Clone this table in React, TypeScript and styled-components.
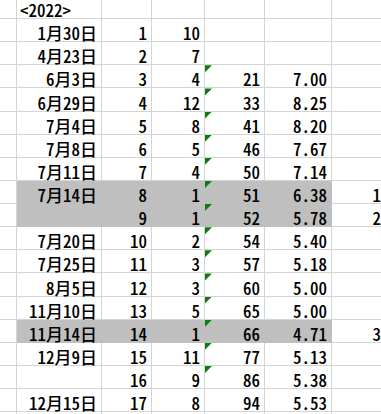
import React from "react";
import styled, { createGlobalStyle } from "styled-components";

const GlobalStyle = createGlobalStyle`
  html, body {
    margin: 0;
    padding: 0;
    background: #ffffff;
    overflow: hidden;
  }
`;

type Row = {
  date: string;
  no: number;
  gap: number;
  total?: number;
  avg?: string;
  extra?: string;
  shade?: boolean;
  flag?: boolean;
};

const rows: Row[] = [
  { date: "1月30日", no: 1, gap: 10 },
  { date: "4月23日", no: 2, gap: 7 },
  { date: "6月3日", no: 3, gap: 4, total: 21, avg: "7.00", flag: true },
  { date: "6月29日", no: 4, gap: 12, total: 33, avg: "8.25", flag: true },
  { date: "7月4日", no: 5, gap: 8, total: 41, avg: "8.20", flag: true },
  { date: "7月8日", no: 6, gap: 5, total: 46, avg: "7.67", flag: true },
  { date: "7月11日", no: 7, gap: 4, total: 50, avg: "7.14", flag: true },
  { date: "7月14日", no: 8, gap: 1, total: 51, avg: "6.38", extra: "1", shade: true, flag: true },
  { date: "", no: 9, gap: 1, total: 52, avg: "5.78", extra: "2", shade: true, flag: true },
  { date: "7月20日", no: 10, gap: 2, total: 54, avg: "5.40", flag: true },
  { date: "7月25日", no: 11, gap: 3, total: 57, avg: "5.18", flag: true },
  { date: "8月5日", no: 12, gap: 3, total: 60, avg: "5.00", flag: true },
  { date: "11月10日", no: 13, gap: 5, total: 65, avg: "5.00", flag: true },
  { date: "11月14日", no: 14, gap: 1, total: 66, avg: "4.71", extra: "3", shade: true, flag: true },
  { date: "12月9日", no: 15, gap: 11, total: 77, avg: "5.13", flag: true },
  { date: "", no: 16, gap: 9, total: 86, avg: "5.38", flag: true },
  { date: "12月15日", no: 17, gap: 8, total: 94, avg: "5.53" },
];

const Sheet = styled.div`
  display: grid;
  grid-template-columns: 17px 85px 50px 53px 60px 67px 54px;
  grid-template-rows: 19px repeat(17, 23.125px) 3px;
  width: 386px;
  overflow: hidden;
  font-family: "Noto Sans CJK JP", "Noto Sans", sans-serif;
  font-feature-settings: "hwid";
  font-size: 17px;
  font-weight: 500;
  line-height: 17px;
  color: #000;
`;

const Cell = styled.div<{ $shade?: boolean; $left?: boolean }>`
  position: relative;
  box-sizing: border-box;
  display: flex;
  align-items: flex-end;
  justify-content: ${(p) => (p.$left ? "flex-start" : "flex-end")};
  padding: 0 ${(p) => (p.$left ? "0" : "4px")} 0 ${(p) => (p.$left ? "3px" : "0")};
  white-space: nowrap;
  background: ${(p) => (p.$shade ? "#bfbfbf" : "#ffffff")};
  border-right: 1px solid ${(p) => (p.$shade ? "#bfbfbf" : "#d4d4d4")};
  border-bottom: 1px solid ${(p) => (p.$shade ? "#bfbfbf" : "#d4d4d4")};
`;

const Flag = styled.span`
  position: absolute;
  top: 0;
  left: 0;
  width: 7px;
  height: 7px;
  background: #107c10;
  clip-path: polygon(0 0, 100% 0, 0 100%);
`;

export default function App() {
  return (
    <>
      <GlobalStyle />
      <Sheet>
        <Cell />
        <Cell $left>&lt;2022&gt;</Cell>
        <Cell />
        <Cell />
        <Cell />
        <Cell />
        <Cell />
        {rows.map((r) => (
          <React.Fragment key={r.no}>
            <Cell />
            <Cell $shade={r.shade}>{r.date}</Cell>
            <Cell $shade={r.shade}>{r.no}</Cell>
            <Cell $shade={r.shade}>{r.gap}</Cell>
            <Cell $shade={r.shade}>
              {r.flag && <Flag />}
              {r.total}
            </Cell>
            <Cell $shade={r.shade}>{r.avg}</Cell>
            <Cell>{r.extra}</Cell>
          </React.Fragment>
        ))}
        <Cell />
        <Cell />
        <Cell />
        <Cell />
        <Cell />
        <Cell />
        <Cell />
      </Sheet>
    </>
  );
}
